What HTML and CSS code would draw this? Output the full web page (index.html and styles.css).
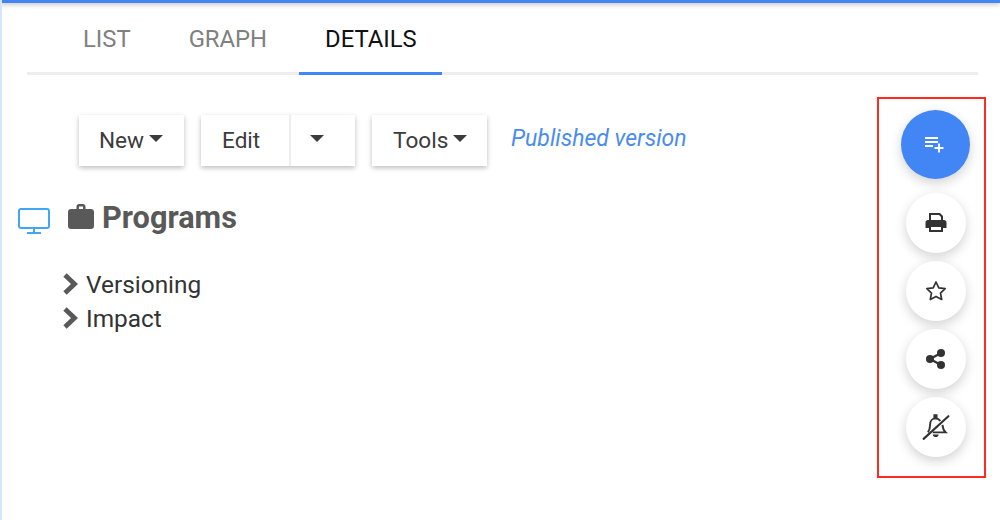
FILE: index.html
```html
<!DOCTYPE html>
<html>

<head>
  <meta charset="utf-8" />
  <title>Programs</title>
  <link rel="stylesheet" href="styles.css">
</head>

<body>
  <div class="top_bar"></div>
  <div class="page">
    <div class="tabs">
      <a class="tab tab-list">LIST</a>
      <a class="tab tab-graph">GRAPH</a>
      <a class="tab tab-details active">DETAILS</a>
    </div>

    <div class="toolbar">
      <div class="btn btn-new">New<span class="caret"></span></div>
      <div class="btn-group">
        <div class="btn btn-edit">Edit</div>
        <div class="btn btn-split"><span class="caret"></span></div>
      </div>
      <div class="btn btn-tools">Tools<span class="caret"></span></div>
      <em class="version">Published version</em>
    </div>

    <div class="title_row">
      <svg class="monitor" width="32" height="26" viewBox="0 0 32 26" fill="none" stroke="#42a5f5" stroke-width="2">
        <rect x="1" y="1" width="30" height="19" rx="2" />
        <path d="M16 20v4M9 25h14" />
      </svg>
      <svg class="briefcase" width="26" height="25" viewBox="0 0 26 25">
        <path fill="#595959" d="M8.500 5V2.500C8.500 1.100 9.600 0 11 0h4c1.400 0 2.500 1.100 2.500 2.500V5h5.500C24.800 5 26 6.200 26 8v14c0 1.700-1.200 3-3 3H3c-1.800 0-3-1.300-3-3V8c0-1.800 1.200-3 3-3zm2.500-2.500V5h4V2.500z" />
      </svg>
      <h1>Programs</h1>
    </div>

    <ul class="tree">
      <li>
        <svg width="16" height="24" viewBox="0 0 16 24"><path d="M3 3l9.500 9-9.500 9" fill="none" stroke="#595959" stroke-width="4.800" /></svg>
        Versioning
      </li>
      <li>
        <svg width="16" height="24" viewBox="0 0 16 24"><path d="M3 3l9.500 9-9.500 9" fill="none" stroke="#595959" stroke-width="4.800" /></svg>
        Impact
      </li>
    </ul>
  </div>

  <div class="fab_box">
    <div class="fab fab-main">
      <svg width="22" height="22" viewBox="0 0 22 22" fill="none" stroke="#fff" stroke-width="1.800">
        <path d="M1 4h13M1 8h13M1 12h8M15 9.500v9M10.500 14h9" />
      </svg>
    </div>
    <div class="fab">
      <svg width="22" height="22" viewBox="0 0 22 22">
        <path fill="#333" d="M4 1h11l3 3v5h-2V5l-2-2H6v6H4z" />
        <path fill="#333" fill-rule="evenodd" d="M3 8h16c1.300 0 2.500 1.200 2.500 2.500V16H18v4H4v-4H.5v-5.500C.5 9.200 1.700 8 3 8zm3 7v3h10v-3z" />
      </svg>
    </div>
    <div class="fab">
      <svg width="22" height="22" viewBox="0 0 22 22">
        <path fill="none" stroke="#333" stroke-width="1.700" stroke-linejoin="round" d="M11 2l2.800 5.900 6.400.8-4.700 4.400 1.200 6.400L11 16.400l-5.700 3.100 1.200-6.400L1.800 8.700l6.400-.8z" />
      </svg>
    </div>
    <div class="fab">
      <svg width="22" height="22" viewBox="0 0 22 22" fill="#333">
        <circle cx="16" cy="5" r="4" />
        <circle cx="5" cy="11" r="4" />
        <circle cx="16" cy="17" r="4" />
        <path d="M5 11l11-6M5 11l11 6" stroke="#333" stroke-width="2.200" />
      </svg>
    </div>
    <div class="fab">
      <svg width="28" height="28" viewBox="0 0 26 26" fill="none" stroke="#333" stroke-width="1.800">
        <path d="M5.500 18c1.500-2 2-4 2-7 0-3.500 2.200-6 5-6 2 0 3.500 1 4.500 2.500M19 11c.2 3 1 5 3 7H10" />
        <path d="M11.500 2h2v3h-2z" fill="#333" />
        <path d="M10 20c.5 3.200 5 3.200 5.500 0z" fill="#333" stroke="none" />
        <path d="M1.500 24L24.500 3" stroke-width="2" stroke-linecap="round" />
      </svg>
    </div>
  </div>
</body>

</html>
```

FILE: styles.css
```css
* {
  box-sizing: border-box;
}

html,
body {
  height: 100%;
}

body {
  margin: 0;
  overflow: hidden;
  background-color: #fff;
  font-family: Roboto, "Liberation Sans", sans-serif;
  border-left: 2px solid #d6e4fd;
}

.top_bar {
  height: 3px;
  margin-left: -2px;
  background-color: #4285f4;
  box-shadow: 0 1px 5px rgba(0, 0, 0, .35);
}

.page {
  padding: 0 20px 0 25px;
  margin-right: 2px;
}

.tabs {
  display: flex;
  height: 72px;
  border-bottom: 3px solid #eeeeee;
}

.tab {
  height: 72px;
  padding-top: 22px;
  font-size: 23.8px;
  line-height: 28px;
  color: #808080;
  border-bottom: 3px solid transparent;
}

.tab-list {
  padding-left: 56px;
  margin-right: 58px;
}

.tab-graph {
  margin-right: 32px;
}

.tab-details {
  padding: 22px 25px 0 26px;
}

.tab.active {
  color: #111;
  border-bottom-color: #4285f4;
}

.toolbar {
  display: flex;
  align-items: center;
  margin-top: 40px;
  margin-left: 52px;
}

.btn {
  height: 51px;
  line-height: 51px;
  font-size: 22.600px;
  color: #3c3c3c;
  background-color: #fff;
  box-shadow: 0 2px 5px rgba(0, 0, 0, .26);
}

.btn-new {
  width: 105px;
  padding-left: 20px;
}

.btn-group {
  display: flex;
  margin-left: 17px;
  box-shadow: 0 2px 5px rgba(0, 0, 0, .26);
}

.btn-group .btn {
  box-shadow: none;
}

.btn-edit {
  width: 90px;
  padding-left: 21px;
  border-right: 2px solid #eeeeee;
}

.btn-split {
  width: 64px;
  padding-left: 19px;
}

.btn-split .caret {
  margin-left: 0;
}

.btn-tools {
  width: 115px;
  padding-left: 21px;
  margin-left: 17px;
}

.caret {
  display: inline-block;
  margin-left: 5px;
  vertical-align: 6px;
  border-top: 7px solid #3c3c3c;
  border-left: 7px solid transparent;
  border-right: 7px solid transparent;
}

.version {
  margin-left: 24px;
  margin-top: -5px;
  font-size: 23px;
  color: #4a8cf0;
}

.title_row {
  display: flex;
  align-items: center;
  margin-top: 33px;
  margin-left: -9px;
}

.monitor {
  margin-top: 6px;
}

.briefcase {
  margin-left: 18px;
  margin-top: -4px;
}

h1 {
  margin: 0 0 0 8px;
  font-size: 30.700px;
  line-height: 38px;
  font-weight: 700;
  color: #595959;
}

.tree {
  list-style: none;
  margin: 30px 0 0 35px;
  padding: 0;
}

.tree li {
  display: flex;
  align-items: center;
  gap: 8px;
  height: 34px;
  font-size: 24.400px;
  color: #333;
}

.fab_box {
  position: absolute;
  left: 877px;
  top: 97px;
  width: 109px;
  height: 381px;
  border: 2px solid #ff2a20;
  display: flex;
  flex-direction: column;
  align-items: center;
  gap: 8px;
  padding: 11px 0 0 8px;
}

.fab {
  display: flex;
  align-items: center;
  justify-content: center;
  width: 60px;
  height: 60px;
  flex: none;
  border-radius: 50%;
  background-color: #fff;
  box-shadow: 0 4px 12px rgba(0, 0, 0, .18);
}

.fab-main {
  width: 69px;
  height: 69px;
  margin: 0 1px 6px 0;
  background-color: #4285f4;
}
```
